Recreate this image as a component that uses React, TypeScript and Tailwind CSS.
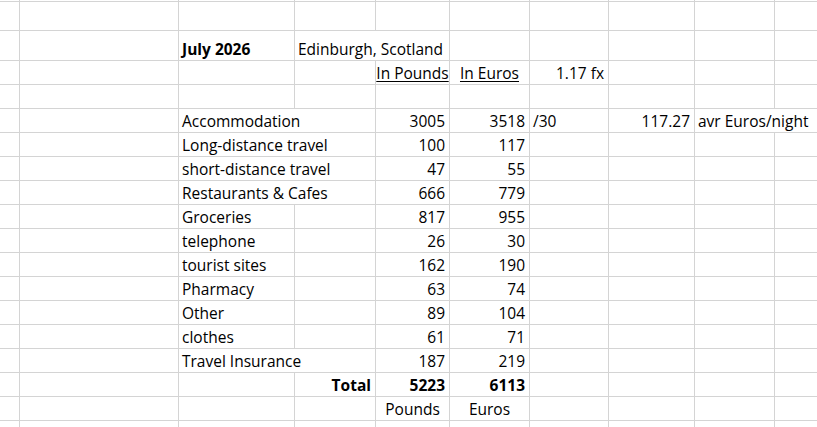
import React from "react";

type Cell = {
  text?: string;
  align?: "left" | "right" | "center";
  bold?: boolean;
  underline?: boolean;
  overflow?: boolean; // text spills into next column, hide right gridline
};

const colWidths = [
  "w-[20px]",
  "w-[159px]",
  "w-[116px]",
  "w-[81px]",
  "w-[74px]",
  "w-[80px]",
  "w-[79px]",
  "w-[86px]",
  "w-[80px]",
  "flex-1",
];

const items: [string, string, string, boolean][] = [
  ["Accommodation", "3005", "3518", true],
  ["Long-distance travel", "100", "117", true],
  ["short-distance travel", "47", "55", true],
  ["Restaurants & Cafes", "666", "779", true],
  ["Groceries", "817", "955", false],
  ["telephone", "26", "30", false],
  ["tourist sites", "162", "190", false],
  ["Pharmacy", "63", "74", false],
  ["Other", "89", "104", false],
  ["clothes", "61", "71", false],
  ["Travel Insurance", "187", "219", true],
];

function Row({ h, cells = {} }: { h: string; cells?: Record<number, Cell> }) {
  return (
    <div className={`flex border-b border-[#d4d4d4] ${h}`}>
      {colWidths.map((w, i) => {
        const c = cells[i];
        const last = i === colWidths.length - 1;
        return (
          <div
            key={i}
            className={`${w} shrink-0 relative flex items-end ${
              last || c?.overflow ? "" : "border-r border-[#d4d4d4]"
            } ${
              c?.align === "right"
                ? "justify-end pr-[4px]"
                : c?.align === "center"
                ? "justify-center"
                : "justify-start pl-[3px]"
            }`}
          >
            {c?.text && (
              <span
                className={`whitespace-nowrap leading-[22px] ${c.bold ? "font-bold" : ""} ${
                  c.underline ? "underline underline-offset-[2px] decoration-1" : ""
                } ${c.overflow ? "relative z-10" : ""}`}
              >
                {c.text}
              </span>
            )}
          </div>
        );
      })}
    </div>
  );
}

export default function App() {
  return (
    <div className="w-[817px] h-[427px] overflow-hidden bg-white text-black text-[15.5px] font-['Open_Sans',sans-serif]">
      <Row h="h-[2px]" />
      <Row h="h-[29px]" />
      <Row
        h="h-[30px]"
        cells={{
          2: { text: "July 2026", bold: true },
          3: { text: "Edinburgh, Scotland", overflow: true },
        }}
      />
      <Row
        h="h-[24px]"
        cells={{
          4: { text: "In Pounds", align: "center", underline: true },
          5: { text: "In Euros", align: "center", underline: true },
          6: { text: "1.17 fx", align: "right" },
        }}
      />
      <Row h="h-[24px]" />
      {items.map(([label, gbp, eur, long], idx) => (
        <Row
          key={label}
          h="h-[24px]"
          cells={{
            2: { text: label, overflow: long },
            4: { text: gbp, align: "right" },
            5: { text: eur, align: "right" },
            ...(idx === 0
              ? {
                  6: { text: "/30" },
                  7: { text: "117.27", align: "right" },
                  8: { text: "avr Euros/night", overflow: true },
                }
              : {}),
          }}
        />
      ))}
      <Row
        h="h-[24px]"
        cells={{
          3: { text: "Total", align: "right", bold: true },
          4: { text: "5223", align: "right", bold: true },
          5: { text: "6113", align: "right", bold: true },
        }}
      />
      <Row
        h="h-[24px]"
        cells={{
          4: { text: "Pounds", align: "center" },
          5: { text: "Euros", align: "center" },
        }}
      />
      <Row h="h-[24px]" />
    </div>
  );
}
